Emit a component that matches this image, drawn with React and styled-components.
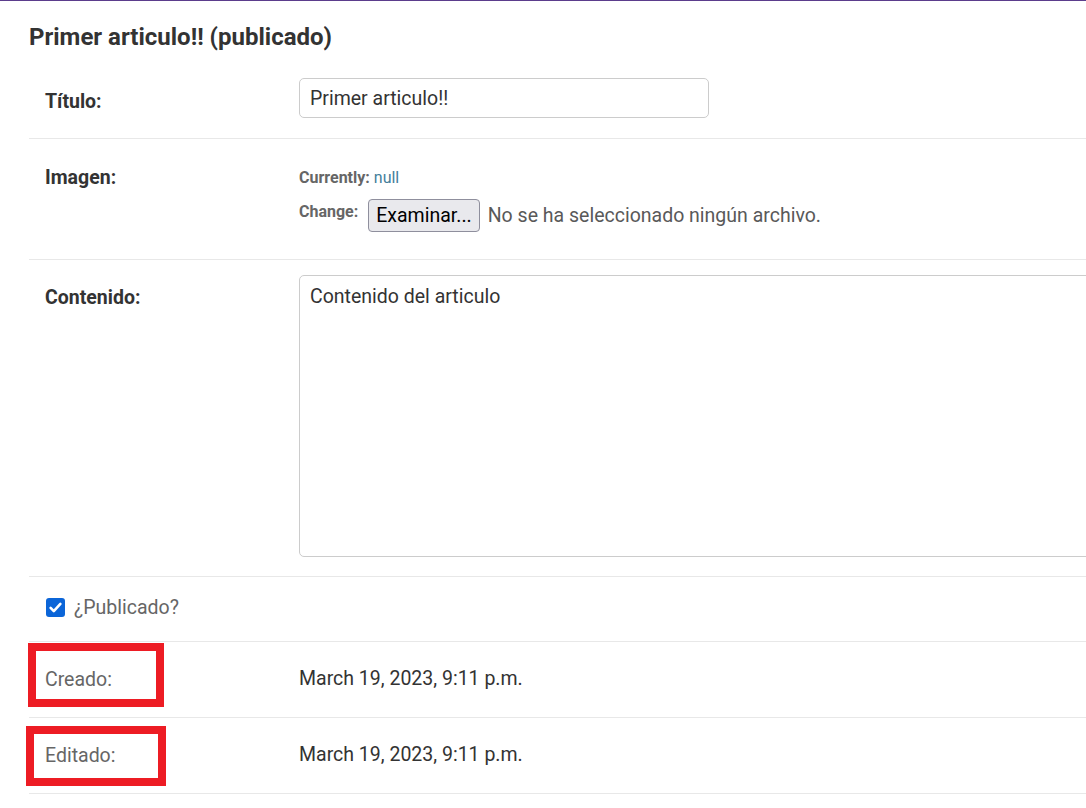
import React from 'react';
import styled, { createGlobalStyle } from 'styled-components';

const GlobalStyle = createGlobalStyle`
  html, body {
    margin: 0;
    padding: 0;
    background: #fff;
    overflow: hidden;
  }
  body {
    font-family: Roboto, "Liberation Sans", Arial, sans-serif;
    color: #333;
  }
`;

const Page = styled.div`
  border-top: 1px solid #5b3d8c;
  padding-left: 29px;
  width: 1200px;
`;

const Heading = styled.h2`
  margin: 21px 0 11px;
  font-size: 24px;
  line-height: 30px;
  font-weight: 700;
  color: #333;
`;

const Fieldset = styled.div`
  display: flex;
  flex-direction: column;
`;

const Row = styled.div`
  display: grid;
  grid-template-columns: 254px 1fr;
  align-items: start;
  padding: ${(p) => p.$pad || '15px 16px 20px'};
  border-bottom: 1px solid #e8e8e8;
`;

const Label = styled.label`
  position: relative;
  font-size: 19.5px;
  line-height: 24px;
  padding-top: ${(p) => p.$top || 0}px;
  font-weight: ${(p) => (p.$plain ? 400 : 700)};
  color: ${(p) => (p.$plain ? '#666' : '#333')};
`;

const TextInput = styled.input`
  box-sizing: border-box;
  width: 410px;
  height: 40px;
  padding: 0 10px;
  border: 1px solid #ccc;
  border-radius: 5px;
  font: inherit;
  font-size: 19.5px;
  color: #333;
  outline: none;
`;

const TextArea = styled.textarea`
  box-sizing: border-box;
  display: block;
  width: 850px;
  height: 282px;
  padding: 9px 10px;
  border: 1px solid #ccc;
  border-radius: 5px;
  font: inherit;
  font-size: 19.5px;
  line-height: 24px;
  color: #333;
  resize: none;
  outline: none;
`;

const FileUpload = styled.div`
  display: flex;
  flex-direction: column;
  gap: 11px;
  padding-top: 14px;
  padding-bottom: 7px;
`;

const UploadLine = styled.div`
  display: flex;
  align-items: flex-start;
  gap: 10px;
  font-size: 16px;
  line-height: 20px;
  color: #666;
`;

const Caption = styled.span`
  font-weight: 700;
  padding-top: ${(p) => p.$top || 0}px;
`;

const Link = styled.a`
  color: #447e9b;
  font-weight: 400;
  text-decoration: none;
`;

const BrowseButton = styled.button`
  box-sizing: border-box;
  height: 33px;
  padding: 0 7px;
  margin-right: -2px;
  border: 1px solid #8f8f9d;
  border-radius: 4px;
  background: #e9e9ed;
  font-family: Roboto, "Liberation Sans", Arial, sans-serif;
  font-size: 19.5px;
  color: #000;
`;

const NoFile = styled.span`
  font-size: 19.5px;
  line-height: 33px;
  color: #595959;
`;

const CheckLine = styled.div`
  display: flex;
  align-items: center;
  gap: 9px;
  height: 30px;
  padding-left: 1px;
  font-size: 19.5px;
  color: #666;
`;

const CheckBox = styled.span`
  display: inline-flex;
  align-items: center;
  justify-content: center;
  width: 19px;
  height: 19px;
  flex-shrink: 0;
  border-radius: 3px;
  background: #0b65d8;
`;

const ReadOnly = styled.div`
  font-size: 19.5px;
  line-height: 24px;
  padding-top: ${(p) => p.$top || 0}px;
  color: #333;
`;

const Highlight = styled.span`
  position: absolute;
  left: ${(p) => p.$left}px;
  top: ${(p) => p.$top}px;
  width: ${(p) => p.$w}px;
  height: ${(p) => p.$h}px;
  box-sizing: border-box;
  border: 8px solid #ed1c24;
  pointer-events: none;
`;

export default function App() {
  return (
    <>
      <GlobalStyle />
      <Page>
        <Heading>Primer articulo!! (publicado)</Heading>
        <Fieldset>
          <Row>
            <Label $top={12}>Título:</Label>
            <TextInput defaultValue="Primer articulo!!" />
          </Row>
          <Row>
            <Label $top={12}>Imagen:</Label>
            <FileUpload>
              <UploadLine>
                <Caption>
                  Currently: <Link href="#">null</Link>
                </Caption>
              </UploadLine>
              <UploadLine>
                <Caption $top={3}>Change:</Caption>
                <BrowseButton type="button">Examinar...</BrowseButton>
                <NoFile>No se ha seleccionado ningún archivo.</NoFile>
              </UploadLine>
            </FileUpload>
          </Row>
          <Row $pad="15px 16px 19px">
            <Label $top={11}>Contenido:</Label>
            <TextArea defaultValue="Contenido del articulo" />
          </Row>
          <Row $pad="15px 16px 19px">
            <CheckLine>
              <CheckBox>
                <svg width="15" height="15" viewBox="0 0 16 16">
                  <path d="M2.8 8.4l3.4 3.4 7-7.6" fill="none" stroke="#fff" strokeWidth="2.8" strokeLinecap="round" strokeLinejoin="round" />
                </svg>
              </CheckBox>
              ¿Publicado?
            </CheckLine>
          </Row>
          <Row $pad="15px 16px 25px">
            <Label $plain $top={11}>
              Creado:
              <Highlight $left={-17} $top={-14} $w={136} $h={64} />
            </Label>
            <ReadOnly $top={10}>March 19, 2023, 9:11 p.m.</ReadOnly>
          </Row>
          <Row $pad="15px 16px 25px">
            <Label $plain $top={11}>
              Editado:
              <Highlight $left={-19} $top={-7} $w={140} $h={60} />
            </Label>
            <ReadOnly $top={10}>March 19, 2023, 9:11 p.m.</ReadOnly>
          </Row>
        </Fieldset>
      </Page>
    </>
  );
}
